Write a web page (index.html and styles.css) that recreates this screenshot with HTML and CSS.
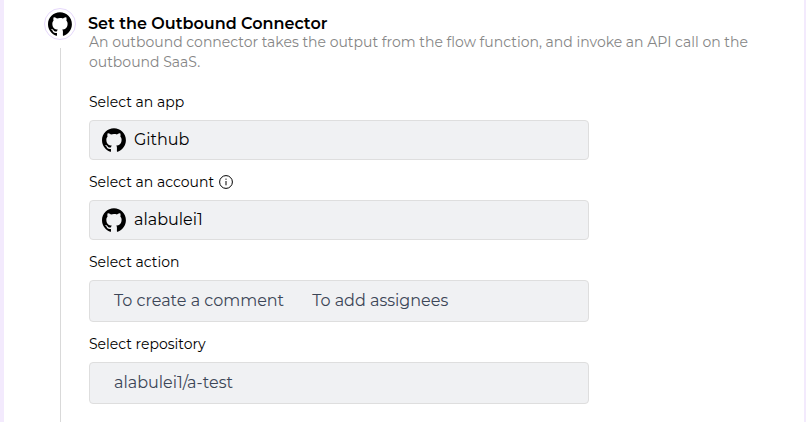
FILE: index.html
```html
<!DOCTYPE html>
<html lang="en">
<head>
<meta charset="utf-8">
<title>Outbound Connector</title>
<link rel="stylesheet" href="styles.css">
</head>
<body>
<svg class="defs" aria-hidden="true">
  <symbol id="github" viewBox="0 0 98 96"><path fill-rule="evenodd" d="M48.854 0C21.839 0 0 22 0 49.217c0 21.756 13.993 40.172 33.405 46.69 2.427.49 3.316-1.059 3.316-2.362 0-1.141-.08-5.052-.08-9.127-13.59 2.934-16.42-5.867-16.42-5.867-2.184-5.704-5.42-7.17-5.42-7.17-4.448-3.015.324-3.015.324-3.015 4.934.326 7.523 5.052 7.523 5.052 4.367 7.496 11.404 5.378 14.235 4.074.404-3.178 1.699-5.378 3.074-6.6-10.839-1.141-22.243-5.378-22.243-24.283 0-5.378 1.94-9.778 5.014-13.2-.485-1.222-2.184-6.275.486-13.038 0 0 4.125-1.304 13.426 5.052a46.97 46.97 0 0 1 12.214-1.63c4.125 0 8.33.571 12.213 1.63 9.302-6.356 13.427-5.052 13.427-5.052 2.67 6.763.97 11.816.485 13.038 3.155 3.422 5.015 7.822 5.015 13.2 0 18.905-11.404 23.06-22.324 24.283 1.78 1.548 3.316 4.481 3.316 9.126 0 6.6-.08 11.897-.08 13.526 0 1.304.89 2.853 3.316 2.364 19.412-6.52 33.405-24.935 33.405-46.691C97.707 22 75.788 0 48.854 0z"/></symbol>
</svg>
<main class="panel">
  <div class="rail">
    <div class="badge"><svg class="mark"><use href="#github"/></svg></div>
    <div class="line"></div>
  </div>
  <section class="step">
    <h1 class="title">Set the Outbound Connector</h1>
    <p class="desc">An outbound connector takes the output from the flow function, and invoke an API call on the<br>outbound SaaS.</p>
    <div class="label">Select an app</div>
    <div class="field"><svg class="mark"><use href="#github"/></svg><span>Github</span></div>
    <div class="label">Select an account
      <svg class="info" viewBox="0 0 14 14"><circle cx="7" cy="7" r="6.4"/><path d="M7 6v4.3M7 3.6v1.2"/></svg>
    </div>
    <div class="field"><svg class="mark"><use href="#github"/></svg><span>alabulei1</span></div>
    <div class="label">Select action</div>
    <div class="field tall"><span>To create a comment</span><span>To add assignees</span></div>
    <div class="label">Select repository</div>
    <div class="field tall"><span>alabulei1/a-test</span></div>
  </section>
</main>
</body>
</html>
```
FILE: styles.css
```css
* { box-sizing: border-box; }
body {
  margin: 0;
  background: #fff;
  color: #000;
  font-family: Montserrat, Inter, sans-serif;
  font-size: 14px;
}
.defs { position: absolute; width: 0; height: 0; }
.panel {
  display: flex;
  height: 422px;
  overflow: hidden;
  border-left: 4px solid #f3eafd;
  border-right: 2px solid #f3eafd;
  padding: 8px 0 0 40px;
}
.rail {
  display: flex;
  flex-direction: column;
  align-items: center;
  flex: 0 0 32px;
}
.badge {
  display: flex;
  align-items: center;
  justify-content: center;
  width: 32px;
  height: 32px;
  border: 1px solid #e6d8fb;
  border-radius: 50%;
}
.mark { display: block; flex: none; width: 24px; height: 24px; }
.line { flex: 1; width: 1px; margin: 8px 0 0 1px; background: #d9d9d9; }
.step { flex: 1; padding: 4px 0 0 13px; white-space: nowrap; }
.title {
  margin: 0 0 0 -1px;
  font-size: 16px;
  font-weight: 600;
  line-height: 24px;
}
.desc { margin: -4px 0 20px; color: #868686; line-height: 20px; }
.label {
  display: flex;
  align-items: center;
  gap: 5px;
  height: 20px;
  margin-bottom: 8px;
}
.info { width: 14px; height: 14px; fill: none; stroke: #000; stroke-width: 1; }
.field {
  display: flex;
  align-items: center;
  width: 500px;
  height: 40px;
  margin-bottom: 12px;
  padding: 0 12px;
  background: #f0f1f3;
  border: 1px solid #dedede;
  border-radius: 4px;
  font-size: 16px;
}
.field span { padding-bottom: 2px; }
.field .mark { margin-right: 8px; }
.tall { height: 42px; padding: 0 24px; gap: 28px; color: #3c4657; }
```
